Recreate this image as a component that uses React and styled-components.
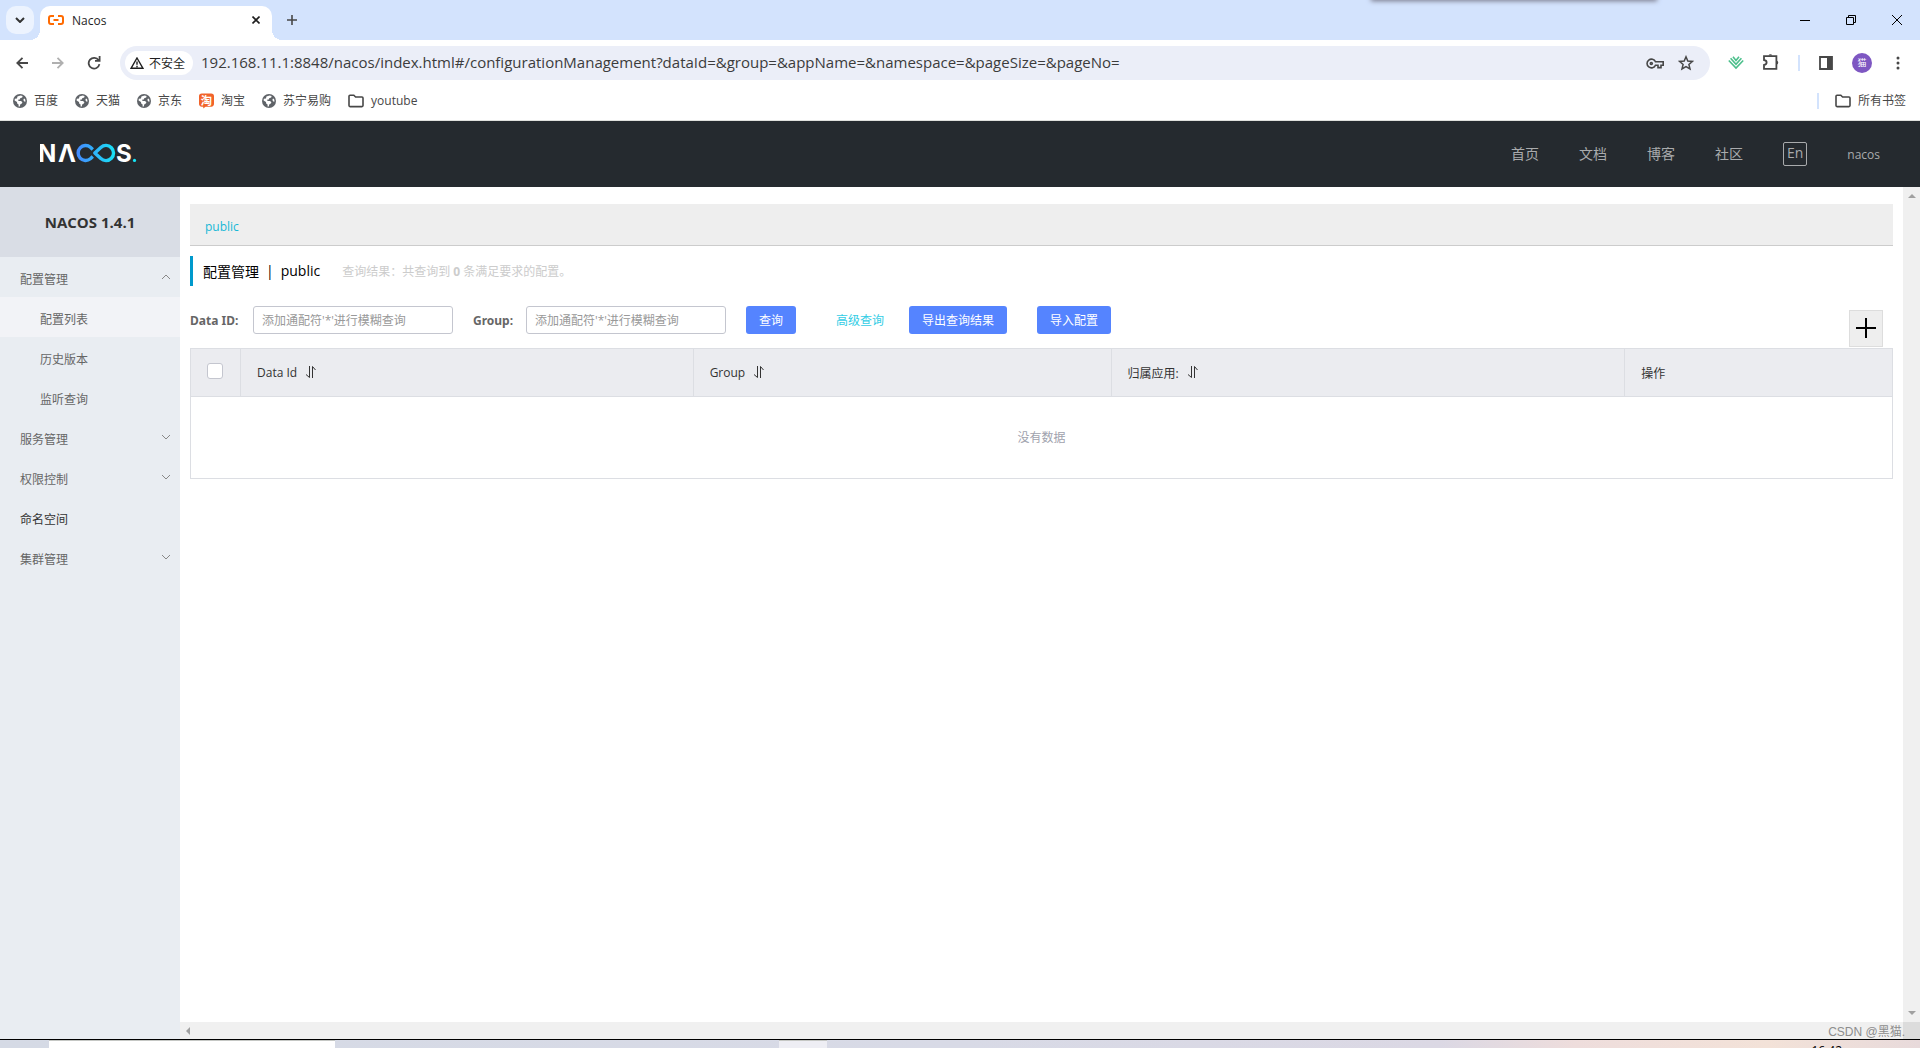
/* eslint-disable react/prop-types */
import React from 'react';
import styled, { createGlobalStyle } from 'styled-components';

const GlobalStyle = createGlobalStyle`
    * { box-sizing: border-box; }
    body {
        margin: 0;
        font-family: 'Open Sans', 'Noto Sans CJK SC', sans-serif;
        font-size: 12px;
        color: #333;
        overflow: hidden;
    }
    button, input { font: inherit; color: inherit; }
    button { border: 0; padding: 0; background: none; cursor: pointer; }
    a { color: inherit; text-decoration: none; }
    svg { display: block; flex: none; }
`;

const Window = styled.div`
    display: flex;
    flex-direction: column;
    height: 100vh;
    background: #fff;
`;

/* ---- browser ---- */

const TabStrip = styled.div`
    position: relative;
    display: flex;
    align-items: flex-start;
    height: 40px;
    padding: 6px 6px 0;
    background: #d3e3fd;
`;

const TopShadow = styled.div`
    position: absolute;
    top: -4px;
    right: 264px;
    width: 284px;
    height: 4px;
    box-shadow: 0 0 5px 1px #778;
`;

const TabSearch = styled.button`
    display: grid;
    place-items: center;
    width: 28px;
    height: 28px;
    margin-right: 6px;
    border-radius: 10px;
    background: #ecf3fe;
`;

const Tab = styled.div`
    position: relative;
    display: flex;
    align-items: center;
    gap: 8px;
    width: 232px;
    height: 34px;
    padding: 0 12px 6px 8px;
    border-radius: 10px 10px 0 0;
    background: #fff;
    color: #1f1f1f;

    &::before, &::after {
        content: '';
        position: absolute;
        bottom: 0;
        width: 10px;
        height: 10px;
    }
    &::before {
        left: -10px;
        background: radial-gradient(circle at 0 0, transparent 10px, #fff 10px);
    }
    &::after {
        right: -10px;
        background: radial-gradient(circle at 100% 0, transparent 10px, #fff 10px);
    }
`;

const TabTitle = styled.span`
    flex: 1;
`;

const IconButton = styled.button`
    display: grid;
    place-items: center;
    width: ${({ $w }) => $w || 16}px;
    height: ${({ $h }) => $h || 28}px;
`;

const NewTab = styled(IconButton)`
    margin-left: 12px;
`;

const WindowButtons = styled.div`
    display: flex;
    gap: 30px;
    margin-left: auto;
    padding-right: 9px;
`;

const Toolbar = styled.div`
    display: flex;
    align-items: center;
    height: 46px;
    padding: 0 14px;
    background: #fff;
    color: #474747;
`;

const NavButtons = styled.div`
    display: flex;
    gap: 20px;
    margin-right: 18px;
`;

const AddressBar = styled.div`
    flex: 1;
    display: flex;
    align-items: center;
    height: 34px;
    padding: 0 16px 0 5px;
    border-radius: 17px;
    background: #ebeef8;
`;

const SecurityChip = styled.button`
    display: flex;
    align-items: center;
    gap: 5px;
    height: 24px;
    padding: 0 8px 0 5px;
    margin-right: 8px;
    border-radius: 12px;
    background: #fff;
    color: #1f1f1f;
    white-space: nowrap;
`;

const Url = styled.input`
    flex: 1;
    min-width: 0;
    padding: 0 0 2px;
    border: 0;
    outline: 0;
    background: none;
    font-size: 15px;
    line-height: 22px;
    color: #3c3c3c;
`;

const AddressActions = styled.div`
    display: flex;
    gap: 14px;
`;

const Extensions = styled.div`
    display: flex;
    align-items: center;
    gap: 18px;
    margin-left: 18px;
`;

const Divider = styled.span`
    width: 2px;
    height: 16px;
    background: #d3e3fd;
`;

const Avatar = styled.button`
    width: 20px;
    height: 20px;
    border-radius: 50%;
    background: #7e57c2;
    color: #fff;
    font-size: 9px;
    line-height: 20px;
`;

const Bookmarks = styled.nav`
    display: flex;
    align-items: center;
    gap: 17px;
    height: 35px;
    padding: 0 14px 4px 13px;
    border-bottom: 1px solid #dfe0dd;
    color: #474747;
`;

const Bookmark = styled.a`
    display: flex;
    align-items: center;
    gap: 7px;
    line-height: 18px;
`;

const AllBookmarks = styled.div`
    display: flex;
    align-items: center;
    gap: 16px;
    margin-left: auto;
`;

/* ---- page ---- */

const Header = styled.header`
    display: flex;
    align-items: center;
    height: 66px;
    padding: 0 40px;
    background: #252a2f;
    color: #a9abad;
`;

const HeaderNav = styled.nav`
    display: flex;
    align-items: center;
    gap: 40px;
    margin-left: auto;
    font-size: 14px;
    line-height: 20px;
`;

const LangButton = styled.button`
    height: 24px;
    padding: 0 3px 2px;
    border: 1px solid #a9abad;
    border-radius: 2px;
    line-height: 20px;
`;

const UserLink = styled.a`
    padding-top: 2px;
    font-size: 12px;
`;

const Body = styled.div`
    flex: 1;
    display: flex;
    min-height: 0;
`;

const Sidebar = styled.aside`
    flex: none;
    width: 180px;
    background: #e9edf2;
`;

const SidebarTitle = styled.h1`
    margin: 0;
    background: #d9dde5;
    font-size: 15px;
    line-height: 70px;
    text-align: center;
`;

const Menu = styled.ul`
    margin: 0;
    padding: 0;
    list-style: none;
`;

const MenuItem = styled.a`
    display: flex;
    align-items: center;
    justify-content: space-between;
    height: 40px;
    padding: 4px 10px 0 ${({ $sub }) => ($sub ? 40 : 20)}px;
    background: ${({ $active }) => ($active ? '#f2f3f7' : 'transparent')};
    color: ${({ $dark }) => ($dark ? '#333' : '#666')};

    svg { margin-bottom: 5px; }
`;

const ScrollArea = styled.div`
    flex: 1;
    min-width: 0;
    display: grid;
    grid-template: 1fr 17px / 1fr 17px;
`;

const Track = styled.div`
    display: flex;
    flex-direction: ${({ $vertical }) => ($vertical ? 'column' : 'row')};
    justify-content: space-between;
    align-items: center;
    padding: ${({ $vertical }) => ($vertical ? '7px 0' : '0 6px')};
    background: #f0f0f0;
`;

const Corner = styled.div`
    background: #dcdcdc;
`;

const Main = styled.main`
    padding: 17px 10px 0;
    background: #fff;
`;

const Namespaces = styled.div`
    height: 42px;
    padding: 3px 15px 0;
    border-bottom: 1px solid #ccc;
    background: #eee;
    color: #17b8d6;
    line-height: 40px;
`;

const TitleRow = styled.div`
    display: flex;
    align-items: center;
    height: 30px;
    margin: 10px 0 20px;
    padding-left: 10px;
    border-left: 3px solid #09c;
    color: #000;
`;

const Title = styled.h2`
    display: flex;
    gap: 7px;
    margin: 0 22px 0 0;
    font-size: 14px;
    font-weight: 400;
`;

const Summary = styled.span`
    color: #ccc;
`;

const SearchForm = styled.form`
    position: relative;
    display: flex;
    align-items: center;
    height: 28px;
    margin-bottom: 14px;
`;

const Label = styled.label`
    width: ${({ $w }) => $w}px;
    color: #666;
    font-family: 'Noto Sans', sans-serif;
    font-weight: 700;
    white-space: nowrap;
`;

const TextInput = styled.input`
    width: 200px;
    height: 28px;
    margin-right: 20px;
    padding: 0 8px;
    border: 1px solid #c4c6cf;
    border-radius: 3px;

    &::placeholder { color: #999; }
`;

const PrimaryButton = styled.button`
    height: 28px;
    padding: 0 13px;
    border-radius: 3px;
    background: #5584ff;
    color: #fff;
    white-space: nowrap;

    & + & { margin-left: 30px; }
`;

const AdvancedLink = styled.a`
    margin: 0 25px 0 40px;
    color: #33cde5;
`;

const AddButton = styled.button`
    position: absolute;
    top: 4px;
    right: 10px;
    display: grid;
    place-items: center;
    width: 34px;
    height: 37px;
    padding-bottom: 2px;
    border: 1px solid #ddd;
    background: #eee;
`;

const Table = styled.table`
    width: 100%;
    table-layout: fixed;
    border-collapse: collapse;
    border: 1px solid #dcdee3;
`;

const HeadCell = styled.th`
    width: ${({ $w }) => $w};
    height: 48px;
    padding: 0 16px;
    border: 1px solid #dcdee3;
    background: #ebecf0;
    font-weight: 400;
    text-align: left;
`;

const CellContent = styled.span`
    display: flex;
    align-items: center;
    gap: 8px;
`;

const Checkbox = styled.input`
    appearance: none;
    display: block;
    width: 16px;
    height: 16px;
    margin: 0 0 3px;
    border: 1px solid #c4c6cf;
    border-radius: 3px;
    background: #fff;
`;

const EmptyCell = styled.td`
    height: 82px;
    padding: 0 0 2px;
    color: #a0a2ad;
    text-align: center;
`;

/* ---- desktop ---- */

const Taskbar = styled.footer`
    display: flex;
    height: 9px;
    border-top: 1px solid #000;
    background: linear-gradient(90deg, #d5dae5 0%, #d8dae6 50%, #dbd8e4 75%, #eedddc 82%, #f3e2d8 92%, #e8dadb 100%);
    overflow: hidden;
`;

const TaskWindow = styled.div`
    width: ${({ $w }) => $w}px;
    margin-left: ${({ $left }) => $left}px;
    border-top: 1px solid #c5c7c4;
    background: ${({ $color }) => $color};
`;

/* only the top of the clock shows above the screen edge */
const Clock = styled.time`
    margin: 4px 78px 0 auto;
    color: #000;
    line-height: 14px;
`;

const Watermark = styled.div`
    position: absolute;
    right: 15px;
    bottom: 7px;
    color: #8d8d8d;
    font-family: 'Liberation Sans', 'Noto Sans CJK SC', sans-serif;
    line-height: 18px;
`;

/* ---- icons ---- */

const Icon = ({ w = 16, h = w, box, stroke = 'currentColor', sw = 2, fill = 'none', children }) => (
    <svg width={w} height={h} viewBox={box || `0 0 ${w} ${h}`} fill={fill} stroke={stroke} strokeWidth={sw}>
        {children}
    </svg>
)

const GlobeIcon = () => (
    <Icon w={14} stroke="none">
        <circle cx="7" cy="7" r="7" fill="#5f6368" />
        <path d="M7.6 1.4 9.6 2 9.2 3.6 7.2 4.2 6.8 5.4 5 5.8 5.6 7 8 7 9.4 8.2 8.8 9.6 7.2 10.4 6.8 12.4 5.6 12.4 5.6 10.6 4.2 9.4 4 8 1.6 6.6 1.8 4.8 4 4.4 4.4 2.6Z M12 4.8 12.6 7.6 11.2 7.4 10.4 6 10.8 4.8Z" fill="#fff" />
    </Icon>
)

const FolderIcon = () => (
    <Icon w={16} h={14} sw={1.6}>
        <path d="M1 2.2Q1 1.2 2 1.2H5.8L7.6 3H14Q15 3 15 4V11.6Q15 12.6 14 12.6H2Q1 12.6 1 11.6Z" />
    </Icon>
)

const TaobaoIcon = () => (
    <Icon w={15} h={16} box="0 0 16 16" stroke="none">
        <path d="M3 0H13Q16 0 16 3V11Q16 14 13 14H7L4.5 16V14H3Q0 14 0 11V3Q0 0 3 0Z" fill="#f1632a" />
        <text x="8" y="12" fill="#fff" fontSize="12" fontWeight="700" textAnchor="middle">淘</text>
    </Icon>
)

const Chevron = ({ up }) => (
    <Icon w={8} h={6} sw={1} stroke="#888">
        <path d={up ? 'M0 5 4 1 8 5' : 'M0 1 4 5 8 1'} />
    </Icon>
)

const SortIcon = () => (
    <Icon w={11} h={15} sw={1} stroke="#333">
        <path d="M4.5 1V12.5L1 9.5M7.5 13V1.5L10.5 5" />
    </Icon>
)

const NacosLogo = () => (
    <svg width="97" height="36" viewBox="0 -8 97 36" role="img" aria-label="NACOS.">
        <defs>
            <linearGradient id="loop" gradientUnits="userSpaceOnUse" x1="36" y1="0" x2="76" y2="0">
                <stop offset="0" stopColor="#4688ff" />
                <stop offset="1" stopColor="#16e4f5" />
            </linearGradient>
        </defs>
        <g fill="#fff" fontFamily="Inter" fontWeight="700" fontSize="24">
            <text x="-2" y="18">N</text>
            <text x="18" y="18">Λ</text>
            <text x="76" y="18">S</text>
        </g>
        <g fill="none" stroke="url(#loop)" strokeWidth="3.4">
            <path d="M52.8 12.6 50.4 14.8A7.5 7.5 0 1 1 50.4 3.2L52.8 5.4" />
            <path d="M54.8 9 60.8 3.4A7.6 7.6 0 1 1 60.8 14.6Z" strokeLinejoin="round" />
        </g>
        <circle cx="94.5" cy="16.4" r="1.6" fill="#16e4f5" />
    </svg>
)

const bookmarks = [
    { name: '百度', icon: <GlobeIcon /> },
    { name: '天猫', icon: <GlobeIcon /> },
    { name: '京东', icon: <GlobeIcon /> },
    { name: '淘宝', icon: <TaobaoIcon /> },
    { name: '苏宁易购', icon: <GlobeIcon /> },
    { name: 'youtube', icon: <FolderIcon /> },
]

const menu = [
    { name: '配置管理', open: true, group: true },
    { name: '配置列表', sub: true, active: true },
    { name: '历史版本', sub: true },
    { name: '监听查询', sub: true },
    { name: '服务管理', group: true },
    { name: '权限控制', group: true },
    { name: '命名空间', dark: true },
    { name: '集群管理', group: true },
]

const columns = [
    { name: 'Data Id', width: '27.4%', sort: true },
    { name: 'Group', width: '25.3%', sort: true },
    { name: '归属应用:', width: '31.1%', sort: true },
    { name: '操作', width: '16.2%' },
]

const Browser = () => (
    <>
        <TabStrip>
            <TopShadow />
            <TabSearch aria-label="搜索标签页">
                <Icon w={10} h={6}><path d="M1 1 5 5 9 1" /></Icon>
            </TabSearch>
            <Tab>
                <Icon w={16} h={10} stroke="#ff6a00">
                    <path d="M6 1H3Q1 1 1 3V7Q1 9 3 9H6M10 1H13Q15 1 15 3V7Q15 9 13 9H10M5.5 5H10.5" />
                </Icon>
                <TabTitle>Nacos</TabTitle>
                <IconButton $w={8} $h={16} aria-label="关闭标签页">
                    <Icon w={8} sw={1.6}><path d="M.5.5 7.5 7.5M7.5.5.5 7.5" /></Icon>
                </IconButton>
            </Tab>
            <NewTab aria-label="新标签页">
                <Icon w={10} sw={1.6} stroke="#474747"><path d="M5 0V10M0 5H10" /></Icon>
            </NewTab>
            <WindowButtons>
                <IconButton aria-label="最小化"><Icon w={10} sw={1} stroke="#000"><path d="M0 5.5H10" /></Icon></IconButton>
                <IconButton aria-label="还原">
                    <Icon w={10} sw={1} stroke="#000"><path d="M.5 2.5H7.5V9.5H.5ZM2.5 2.5V.5H9.5V7.5H7.5" /></Icon>
                </IconButton>
                <IconButton aria-label="关闭"><Icon w={10} sw={1} stroke="#000"><path d="M0 0 10 10M10 0 0 10" /></Icon></IconButton>
            </WindowButtons>
        </TabStrip>
        <Toolbar>
            <NavButtons>
                <IconButton aria-label="后退"><Icon w={12} sw={1.8}><path d="M12 6H1.5M6.5.8 1.3 6 6.5 11.2" /></Icon></IconButton>
                <IconButton aria-label="前进"><Icon w={12} sw={1.8} stroke="#b0b0b0"><path d="M0 6H10.5M5.5.8 10.7 6 5.5 11.2" /></Icon></IconButton>
                <IconButton aria-label="重新加载">
                    <Icon w={14} sw={1.8}><path d="M11.6 4.2A5.4 5.4 0 1 0 12.4 8.2M12.6 0V4.8H8" /></Icon>
                </IconButton>
            </NavButtons>
            <AddressBar>
                <SecurityChip>
                    <Icon w={14} h={12} sw={1.4}><path d="M7 1 13 11.3H1ZM7 4.5V7.8M7 8.8V10.2" /></Icon>
                    不安全
                </SecurityChip>
                <Url
                    aria-label="地址"
                    defaultValue="192.168.11.1:8848/nacos/index.html#/configurationManagement?dataId=&group=&appName=&namespace=&pageSize=&pageNo="
                />
                <AddressActions>
                    <IconButton $w={18} aria-label="密码">
                        <Icon w={18} h={11} sw={1.6}>
                            <path d="M9.5 3.8A4.4 4.4 0 1 0 9.5 7.2H12V9.6H15V7.2H17.2V3.8Z" />
                            <circle cx="5.3" cy="5.5" r="1" />
                        </Icon>
                    </IconButton>
                    <IconButton aria-label="收藏">
                        <Icon w={16} sw={1.5}>
                            <path d="M8 1.8 9.8 6 14.4 6.4 10.9 9.4 12 13.9 8 11.5 4 13.9 5.1 9.4 1.6 6.4 6.2 6Z" />
                        </Icon>
                    </IconButton>
                </AddressActions>
            </AddressBar>
            <Extensions>
                <IconButton aria-label="扩展">
                    <Icon w={16} h={14} stroke="#4bbf8b" sw={1.6}>
                        <path d="M.8 4.5 8 12 15.2 4.5M2.6 2.2 8 8.2 13.4 2.2M5 .8 8 4.4 11 .8" />
                    </Icon>
                </IconButton>
                <IconButton $w={18} aria-label="扩展程序">
                    <Icon w={18} box="0 1 18 18" sw={1.8}>
                        <path d="M2 3.2H14.4V15.8H2V12Q4.6 11.6 4.6 9.5 4.6 7.4 2 7Z" />
                        <path d="M6.5 2.6A2 2 0 0 1 10.3 2.6ZM15 7.7A2 2 0 0 1 15 11.4Z" fill="currentColor" stroke="none" />
                    </Icon>
                </IconButton>
                <Divider />
                <IconButton aria-label="侧边栏">
                    <Icon w={14} sw={1.8}><path d="M1 1H13V13H1Z" /><path d="M8 1H13V13H8Z" fill="currentColor" stroke="none" /></Icon>
                </IconButton>
                <Avatar>猫</Avatar>
                <IconButton aria-label="菜单">
                    <Icon w={4} h={14} stroke="none" fill="currentColor">
                        <circle cx="2" cy="2" r="1.5" /><circle cx="2" cy="7" r="1.5" /><circle cx="2" cy="12" r="1.5" />
                    </Icon>
                </IconButton>
            </Extensions>
        </Toolbar>
        <Bookmarks>
            {bookmarks.map(({ name, icon }) => (
                <Bookmark href="#" key={name}>{icon}{name}</Bookmark>
            ))}
            <AllBookmarks>
                <Divider />
                <Bookmark href="#"><FolderIcon />所有书签</Bookmark>
            </AllBookmarks>
        </Bookmarks>
    </>
)

const SideMenu = () => (
    <Sidebar>
        <SidebarTitle>NACOS 1.4.1</SidebarTitle>
        <Menu>
            {menu.map(({ name, sub, active, dark, group, open }) => (
                <li key={name}>
                    <MenuItem href="#" $sub={sub} $active={active} $dark={dark}>
                        {name}
                        {group && <Chevron up={open} />}
                    </MenuItem>
                </li>
            ))}
        </Menu>
    </Sidebar>
)

const ConfigTable = () => (
    <Table>
        <thead>
            <tr>
                <HeadCell $w="50px"><Checkbox type="checkbox" aria-label="全选" /></HeadCell>
                {columns.map(({ name, width, sort }) => (
                    <HeadCell key={name} $w={width}>
                        <CellContent>{name}{sort && <SortIcon />}</CellContent>
                    </HeadCell>
                ))}
            </tr>
        </thead>
        <tbody>
            <tr><EmptyCell colSpan={5}>没有数据</EmptyCell></tr>
        </tbody>
    </Table>
)

const ConfigPage = () => (
    <Main>
        <Namespaces><a href="#">public</a></Namespaces>
        <TitleRow>
            <Title><span>配置管理</span><span>|</span><span>public</span></Title>
            <Summary>查询结果：共查询到 <strong>0</strong> 条满足要求的配置。</Summary>
        </TitleRow>
        <SearchForm onSubmit={e => e.preventDefault()}>
            <Label htmlFor="dataId" $w={63}>Data ID:</Label>
            <TextInput id="dataId" placeholder="添加通配符'*'进行模糊查询" />
            <Label htmlFor="group" $w={53}>Group:</Label>
            <TextInput id="group" placeholder="添加通配符'*'进行模糊查询" />
            <PrimaryButton type="submit">查询</PrimaryButton>
            <AdvancedLink href="#">高级查询</AdvancedLink>
            <PrimaryButton type="button">导出查询结果</PrimaryButton>
            <PrimaryButton type="button">导入配置</PrimaryButton>
            <AddButton type="button" aria-label="新建配置">
                <Icon w={20} stroke="#000"><path d="M10 0V20M0 10H20" /></Icon>
            </AddButton>
        </SearchForm>
        <ConfigTable />
    </Main>
)

const Arrow = ({ d, w = 8, h = 4 }) => (
    <Icon w={w} h={h} stroke="none" fill="#a0a0a0"><path d={d} /></Icon>
)

const App = () => (
    <Window>
        <GlobalStyle />
        <Browser />
        <Header>
            <NacosLogo />
            <HeaderNav>
                <a href="#">首页</a>
                <a href="#">文档</a>
                <a href="#">博客</a>
                <a href="#">社区</a>
                <LangButton>En</LangButton>
                <UserLink href="#">nacos</UserLink>
            </HeaderNav>
        </Header>
        <Body>
            <SideMenu />
            <ScrollArea>
                <ConfigPage />
                <Track $vertical>
                    <Arrow d="M0 4 4 0 8 4Z" />
                    <Arrow d="M0 0 4 4 8 0Z" />
                </Track>
                <Track><Arrow w={4} h={8} d="M4 0 0 4 4 8Z" /></Track>
                <Corner />
            </ScrollArea>
        </Body>
        <Taskbar>
            <TaskWindow $left={49} $w={286} $color="#fff" />
            <TaskWindow $left={444} $w={48} $color="#eeeef4" />
            <Clock>16:42</Clock>
        </Taskbar>
        <Watermark>CSDN @黑猫.</Watermark>
    </Window>
)

export default App;
